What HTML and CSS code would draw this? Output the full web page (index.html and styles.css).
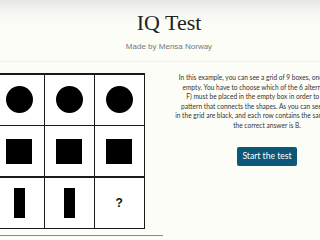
FILE: index.html
```html
<!DOCTYPE html>
<html lang="en">
<head>
<meta charset="utf-8">
<title>IQ Test</title>
<link rel="stylesheet" href="styles.css">
</head>
<body>
<div class="page">
  <header class="header">
    <h1 class="title">IQ Test</h1>
    <p class="subtitle">Made by Mensa Norway</p>
  </header>
  <main class="main">
    <section class="puzzle">
      <div class="matrix">
        <div class="cell"><span class="circle"></span></div>
        <div class="cell"><span class="circle"></span></div>
        <div class="cell"><span class="circle"></span></div>
        <div class="cell"><span class="square"></span></div>
        <div class="cell"><span class="square"></span></div>
        <div class="cell"><span class="square"></span></div>
        <div class="cell"><span class="bar"></span></div>
        <div class="cell"><span class="bar"></span></div>
        <div class="cell"><span class="question">?</span></div>
      </div>
      <div class="rule"></div>
    </section>
    <section class="intro">
      <div class="text">
        <div class="line">In this example, you can see a grid of 9 boxes, one of which is</div>
        <div class="line">empty. You have to choose which of the 6 alternatives (A –</div>
        <div class="line">F) must be placed in the empty box in order to complete</div>
        <div class="line">pattern that connects the shapes. As you can see, all shapes</div>
        <div class="line">in the grid are black, and each row contains the same shapes, so</div>
        <div class="line">the correct answer is B.</div>
      </div>
      <div class="action">
        <button class="start" type="button">Start the test</button>
      </div>
    </section>
  </main>
</div>
</body>
</html>
```
FILE: styles.css
```css
html, body {
  margin: 0;
  padding: 0;
  background: #fdfdf7;
  overflow: hidden;
}
.page {
  width: 338px;
}
.header {
  height: 62px;
  background: linear-gradient(#e6e6e4 0px, #f6f6f2 12px, #fdfdf7 24px);
  border-bottom: 1px solid #f1f1ec;
  text-align: center;
  padding-top: 1px;
  box-sizing: border-box;
}
.title {
  margin: 9px 0 0;
  font-family: "Liberation Serif", serif;
  font-weight: normal;
  font-size: 22px;
  line-height: 26px;
  color: #222;
}
.subtitle {
  margin: 6px 0 0;
  font-family: "Liberation Sans", Arial, sans-serif;
  font-size: 8px;
  line-height: 10px;
  color: #777;
}
.main {
  display: flex;
  align-items: flex-start;
  gap: 10px;
  padding-top: 11px;
}
.puzzle {
  width: 163px;
  flex: none;
}
.matrix {
  margin-left: -6.5px;
  display: grid;
  grid-template-columns: repeat(3, 48.5px);
  grid-template-rows: repeat(3, 50px);
  gap: 1.5px;
  padding: 1.5px;
  background: #1a1a1a;
  width: max-content;
}
.cell {
  background: #fff;
  display: flex;
  align-items: center;
  justify-content: center;
}
.circle {
  width: 27px;
  height: 27px;
  border-radius: 50%;
  background: #000;
}
.square {
  width: 26px;
  height: 25px;
  background: #000;
}
.bar {
  width: 11px;
  height: 30px;
  background: #000;
}
.question {
  font-family: "Liberation Sans", Arial, sans-serif;
  font-weight: bold;
  font-size: 12px;
  color: #111;
}
.rule {
  margin-top: 6px;
  height: 1px;
  background: #8a8a8a;
}
.intro {
  width: 188px;
  flex: none;
  display: flex;
  flex-direction: column;
  align-items: center;
}
.text {
  display: flex;
  flex-direction: column;
  align-items: center;
  font-family: Lato, sans-serif;
  font-size: 6.6px;
  line-height: 9.5px;
  color: #333;
}
.line {
  white-space: nowrap;
  height: 9.5px;
}
.action {
  padding-top: 17px;
}
.start {
  display: block;
  margin: 0;
  width: 60px;
  height: 19px;
  border: none;
  border-radius: 2px;
  background: #0b5878;
  color: #fff;
  font-family: Lato, sans-serif;
  font-size: 8.6px;
  line-height: 19px;
  padding: 0;
}
```
